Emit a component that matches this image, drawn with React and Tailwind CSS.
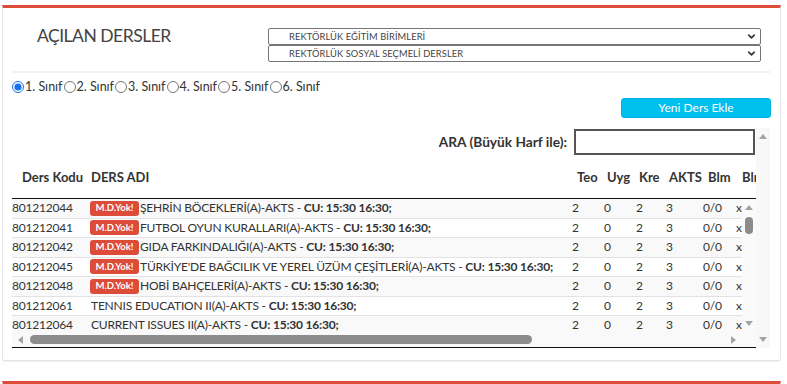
import { ChevronDown } from 'lucide-react';

const rows = [
  { code: '801212044', yok: true, name: 'ŞEHRİN BÖCEKLERİ(A)-AKTS' },
  { code: '801212041', yok: true, name: 'FUTBOL OYUN KURALLARI(A)-AKTS' },
  { code: '801212042', yok: true, name: 'GIDA FARKINDALIĞI(A)-AKTS' },
  { code: '801212045', yok: true, name: "TÜRKİYE'DE BAĞCILIK VE YEREL ÜZÜM ÇEŞİTLERİ(A)-AKTS" },
  { code: '801212048', yok: true, name: 'HOBİ BAHÇELERİ(A)-AKTS' },
  { code: '801212061', yok: false, name: 'TENNIS EDUCATION II(A)-AKTS' },
  { code: '801212064', yok: false, name: 'CURRENT ISSUES II(A)-AKTS' },
];

const grades = ['1', '2', '3', '4', '5', '6'];

function Up() {
  return <div className="w-0 h-0 border-x-[4px] border-x-transparent border-b-[5px] border-b-[#a3a3a3]" />;
}
function Down() {
  return <div className="w-0 h-0 border-x-[4px] border-x-transparent border-t-[5px] border-t-[#a3a3a3]" />;
}

function FakeSelect({ label }) {
  return (
    <div className="h-[17px] border border-[#767676] rounded-[2px] flex items-center justify-between pl-[20px] pr-[3px] bg-white">
      <span className="text-[9.3px] text-[#444] tracking-[0.1px]">{label}</span>
      <ChevronDown size={11} strokeWidth={3.5} className="text-[#333]" />
    </div>
  );
}

export default function App() {
  return (
    <div className="min-h-screen bg-white text-[#333] font-['Lato',sans-serif] overflow-hidden">
      <div className="pt-[5px] pl-[2px] w-[781px]">
        {/* Card */}
        <div className="border-t-[3px] border-t-[#dd4b39] border-x border-b border-x-[#e8e8e8] border-b-[#e4e4e4] rounded-b-[3px] shadow-[0_1px_1px_rgba(0,0,0,0.06)] bg-white pb-[10px]">
          {/* Header */}
          <div className="flex pt-[20px] pr-[19px]">
            <h3 className="w-[265px] pl-[34px] mt-[-1px] text-[17.5px] tracking-[-0.5px] text-[#444] leading-[18px]">AÇILAN DERSLER</h3>
            <div className="flex-1">
              <FakeSelect label="REKTÖRLÜK EĞİTİM BİRİMLERİ" />
              <FakeSelect label="REKTÖRLÜK SOSYAL SEÇMELİ DERSLER" />
            </div>
          </div>
          <div className="mx-[9px] mr-[10px] mt-[9px] h-[2px] bg-[#f2f2f2]" />

          {/* Radios */}
          <div className="flex items-center pl-[9px] mt-[7px] h-[14px] text-[12.5px] text-[#333]">
            {grades.map(g => (
              <label key={g} className="flex items-center">
                <input type="radio" name="sinif" defaultChecked={g === '1'} className="m-0 w-[12px] h-[12px] accent-[#1a73e8]" />
                <span className="ml-[1px] mr-[1px]">{g}. Sınıf</span>
              </label>
            ))}
          </div>

          {/* Button */}
          <div className="flex justify-end pr-[9px] mt-[4px]">
            <button className="w-[150px] h-[20px] rounded-[3px] bg-[#00c0ef] border border-[#00b4e0] text-white text-[12px] leading-none">Yeni Ders Ekle</button>
          </div>

          {/* Scroll area */}
          <div className="flex ml-[9px] mr-[10px] mt-[10px] h-[222px] overflow-hidden">
            <div className="w-[744px] shrink-0">
              <div className="flex justify-end items-center gap-[7px] pt-[1px] pr-[1px]">
                <span className="text-[13.7px] font-bold text-[#333]">ARA (Büyük Harf ile):</span>
                <input className="w-[181px] h-[26px] border-2 border-[#555] bg-white outline-none" />
              </div>

              {/* Table head */}
              <div className="h-[44px] flex items-end pb-[11px] border-b border-[#111] text-[13px] font-bold text-[#333] whitespace-nowrap">
                <div className="w-[78px] shrink-0 pl-[10px]">Ders Kodu</div>
                <div className="w-[482px] shrink-0 pl-[1px]">DERS ADI</div>
                <div className="w-[32px] shrink-0 pl-[5px]">Teo</div>
                <div className="w-[32px] shrink-0 pl-[3px]">Uyg</div>
                <div className="w-[30px] shrink-0 pl-[3px]">Kre</div>
                <div className="w-[37px] shrink-0 pl-[3px]">AKTS</div>
                <div className="w-[33px] shrink-0 pl-[5px]">Blm</div>
                <div className="w-[20px] shrink-0 pl-[6px] overflow-hidden">Blm</div>
              </div>

              {/* Table body */}
              <div className="flex h-[133px]">
                <div className="w-[730px] overflow-hidden">
                  {rows.map((r, i) => (
                    <div key={r.code} className={`flex items-center h-[19.5px] border-b border-[#e2e2e2] text-[12px] tracking-[-0.2px] whitespace-nowrap w-[760px] ${i % 2 === 0 ? 'bg-[#f9f9f9]' : 'bg-white'}`}>
                      <div className="w-[78px] shrink-0">{r.code}</div>
                      <div className="w-[482px] shrink-0 flex items-center">
                        {r.yok ? (
                          <span className="shrink-0 h-[15px] w-[49px] rounded-[3px] bg-[#dd4b39] text-white text-[9.5px] tracking-normal font-bold flex items-center justify-center mr-[1px]">M.D.Yok!</span>
                        ) : (
                          <span className="w-[1px]" />
                        )}
                        <span>{r.name} - <b>CU: 15:30 16:30;</b></span>
                      </div>
                      <div className="w-[32px] shrink-0">2</div>
                      <div className="w-[32px] shrink-0">0</div>
                      <div className="w-[30px] shrink-0">2</div>
                      <div className="w-[37px] shrink-0">3</div>
                      <div className="w-[33px] shrink-0">0/0</div>
                      <div className="w-[20px] shrink-0">x</div>
                    </div>
                  ))}
                </div>
                {/* inner vertical scrollbar */}
                <div className="w-[14px] bg-[#fafafa] flex flex-col items-center pt-[6px] pb-[6px]">
                  <Up />
                  <div className="mt-[7px] w-[8px] h-[17px] rounded-full bg-[#8c8c8c]" />
                  <div className="flex-1" />
                  <Down />
                </div>
              </div>

              {/* horizontal scrollbar */}
              <div className="h-[15px] bg-[#f9f9f9] flex items-center pl-[6px] pr-[20px]">
                <div className="w-0 h-0 border-y-[4px] border-y-transparent border-r-[5px] border-r-[#a3a3a3]" />
                <div className="ml-[7px] w-[502px] h-[9px] rounded-full bg-[#8c8c8c]" />
                <div className="flex-1" />
                <div className="w-0 h-0 border-y-[4px] border-y-transparent border-l-[5px] border-l-[#a3a3a3]" />
              </div>
              <div className="h-[1px] bg-[#111]" />
            </div>

            {/* outer vertical scrollbar */}
            <div className="w-[14px] h-[220px] bg-[#f8f8f8] flex flex-col items-center justify-between pt-[6px] pb-[6px]">
              <Up />
              <Down />
            </div>
          </div>
        </div>

        {/* Next card */}
        <div className="mt-[20px] border-t-[3px] border-t-[#dd4b39] border-x border-x-[#e8e8e8] h-[40px]" />
      </div>
    </div>
  );
}
